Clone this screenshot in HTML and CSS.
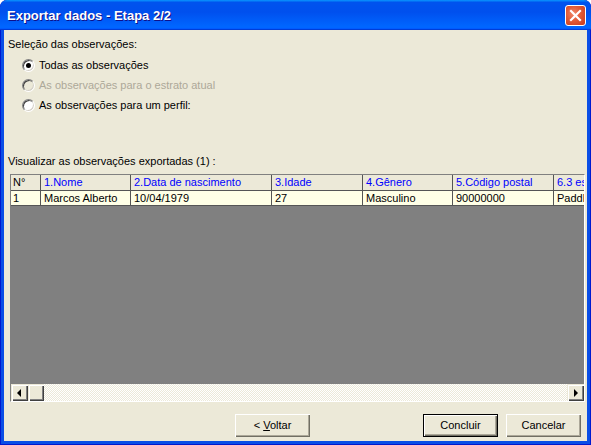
FILE: index.html
```html
<!DOCTYPE html>
<html lang="pt">
<head>
<meta charset="utf-8">
<title>Exportar dados - Etapa 2/2</title>
<link rel="stylesheet" href="styles.css">
</head>
<body>
<div class="window">
  <div class="titlebar">
    <span class="title">Exportar dados - Etapa 2/2</span>
    <div class="close">
      <svg width="19" height="19" viewBox="0 0 19 19"><path d="M5 5 L14 14 M14 5 L5 14" stroke="#fff" stroke-width="2.2" stroke-linecap="square"/></svg>
    </div>
  </div>
  <div class="content">
    <div class="label label-sel">Seleção das observações:</div>
    <div class="radios">
      <div class="radio"><span class="circle checked"></span><span>Todas as observações</span></div>
      <div class="radio disabled"><span class="circle"></span><span>As observações para o estrato atual</span></div>
      <div class="radio"><span class="circle"></span><span>As observações para um perfil:</span></div>
    </div>
    <div class="label label-vis">Visualizar as observações exportadas (1) :</div>
    <div class="grid">
      <div class="grid-inner">
        <div class="row head">
          <div class="cell c1 first">N°</div>
          <div class="cell c2">1.Nome</div>
          <div class="cell c3">2.Data de nascimento</div>
          <div class="cell c4">3.Idade</div>
          <div class="cell c5">4.Gênero</div>
          <div class="cell c6">5.Código postal</div>
          <div class="cell c7">6.3 esporte preferido</div>
        </div>
        <div class="row data">
          <div class="cell c1 first">1</div>
          <div class="cell c2">Marcos Alberto</div>
          <div class="cell c3">10/04/1979</div>
          <div class="cell c4">27</div>
          <div class="cell c5">Masculino</div>
          <div class="cell c6">90000000</div>
          <div class="cell c7">Paddle</div>
        </div>
        <div class="empty"></div>
        <div class="hscroll">
          <div class="sbtn"><span class="arrow-left"></span></div>
          <div class="thumb"></div>
          <div class="track"></div>
          <div class="sbtn"><span class="arrow-right"></span></div>
        </div>
      </div>
    </div>
    <div class="buttons">
      <div class="btn back">&lt; <u>V</u>oltar</div>
      <div class="btn default">Concluir</div>
      <div class="btn">Cancelar</div>
    </div>
  </div>
</div>
</body>
</html>
```

FILE: styles.css
```css
html, body {
  margin: 0;
  padding: 0;
}
body {
  width: 591px;
  height: 445px;
  overflow: hidden;
  background: #ffffff;
  font-family: "Liberation Sans", Arial, sans-serif;
  font-size: 11px;
  color: #000;
}
.window {
  width: 591px;
  height: 445px;
  display: flex;
  flex-direction: column;
  background: #0a4ee6;
  border-radius: 7px 7px 0 0;
  overflow: hidden;
  box-shadow: inset 1px 0 #0019cf, inset -1px 0 #0019cf, inset 0 -1px #0019cf;
}
.titlebar {
  height: 30px;
  flex: none;
  display: flex;
  align-items: flex-start;
  background: linear-gradient(180deg, #0997ff 0, #0053ee 8%, #0050ee 40%, #0066ff 88%, #0066ff 93%, #005bff 95%, #003dd7 96%, #003dd7 100%);
  border-radius: 7px 7px 0 0;
}
.title {
  margin: 8px 0 0 7px;
  font-weight: bold;
  font-size: 13px;
  line-height: 15px;
  color: #fff;
  text-shadow: 1px 1px #0f1089;
}
.close {
  margin: 5px 5px 0 auto;
  width: 19px;
  height: 19px;
  border: 1px solid #fff;
  border-radius: 3px;
  background: radial-gradient(circle at 40% 40%, #f08a6c 0, #e25a36 45%, #c8391c 100%);
  display: flex;
}
.content {
  flex: 1;
  margin: 0 4px 4px 4px;
  background: #ece9d8;
  display: flex;
  flex-direction: column;
}
.label {
  line-height: 13px;
  margin-left: 4px;
}
.label-sel {
  margin-top: 8px;
}
.radios {
  margin-top: 7px;
  display: flex;
  flex-direction: column;
  gap: 5px;
}
.radio {
  height: 15px;
  line-height: 15px;
  display: flex;
  align-items: center;
  padding-left: 18px;
  gap: 4px;
}
.circle {
  width: 11px;
  height: 11px;
  border-radius: 50%;
  border: 1px solid;
  border-color: #808080 #fff #fff #808080;
  background: #fff;
  box-shadow: inset 1px 1px #404040, inset -1px -1px #d4d0c8;
  position: relative;
  flex: none;
}
.circle.checked::after {
  content: "";
  position: absolute;
  left: 3px;
  top: 3px;
  width: 5px;
  height: 5px;
  border-radius: 50%;
  background: #000;
}
.radio.disabled {
  color: #aca899;
}
.radio.disabled .circle {
  background: #ece9d8;
}
.label-vis {
  margin-top: 42px;
}
.grid {
  margin: 6px 0 0 6px;
  width: 575px;
  height: 228px;
  box-sizing: border-box;
  border: 1px solid;
  border-color: #808080 #fff #fff #808080;
}
.grid-inner {
  height: 100%;
  display: flex;
  flex-direction: column;
  background: #808080;
  overflow: hidden;
}
.row {
  display: flex;
  flex: none;
  white-space: nowrap;
}
.head {
  height: 16px;
  line-height: 15px;
  background: #ece9d8;
}
.data {
  height: 15px;
  line-height: 14px;
  background: #ffffe6;
}
.cell {
  box-sizing: border-box;
  flex: none;
  overflow: hidden;
  padding-left: 3px;
  border-right: 1px solid #555;
  border-bottom: 1px solid #555;
}
.cell.first {
  padding-left: 2px;
}
.head .cell {
  color: #0000ff;
}
.head .cell.first {
  color: #000;
}
.c1 { width: 30px; }
.c2 { width: 90px; }
.c3 { width: 141px; }
.c4 { width: 91px; }
.c5 { width: 90px; }
.c6 { width: 101px; }
.c7 { width: 120px; }
.empty {
  flex: 1;
}
.hscroll {
  height: 17px;
  flex: none;
  display: flex;
  background: repeating-conic-gradient(#ffffff 0 25%, #ece9d8 0 50%) 0 0 / 2px 2px;
}
.sbtn, .thumb {
  width: 17px;
  height: 17px;
  box-sizing: border-box;
  background: #ece9d8;
  box-shadow: inset 1px 1px #ece9d8, inset 2px 2px #fff, inset -1px -1px #404040, inset -2px -2px #808080;
  display: flex;
  align-items: center;
  justify-content: center;
  flex: none;
}
.thumb {
  width: 16px;
}
.track {
  flex: 1;
}
.arrow-left {
  width: 0;
  height: 0;
  border-top: 4px solid transparent;
  border-bottom: 4px solid transparent;
  border-right: 4px solid #000;
  margin-left: -1px;
}
.arrow-right {
  width: 0;
  height: 0;
  border-top: 4px solid transparent;
  border-bottom: 4px solid transparent;
  border-left: 4px solid #000;
  margin-left: 1px;
}
.buttons {
  margin-top: 12px;
  display: flex;
  justify-content: flex-end;
  gap: 8px;
  padding-right: 6px;
}
.btn {
  width: 75px;
  height: 23px;
  box-sizing: border-box;
  line-height: 23px;
  text-align: center;
  background: #ece9d8;
  box-shadow: inset 1px 1px #fff, inset -1px -1px #716f64, inset -2px -2px #aca899;
}
.btn.back {
  margin-right: 105px;
}
.btn.default {
  border: 1px solid #000;
  line-height: 21px;
}
```
